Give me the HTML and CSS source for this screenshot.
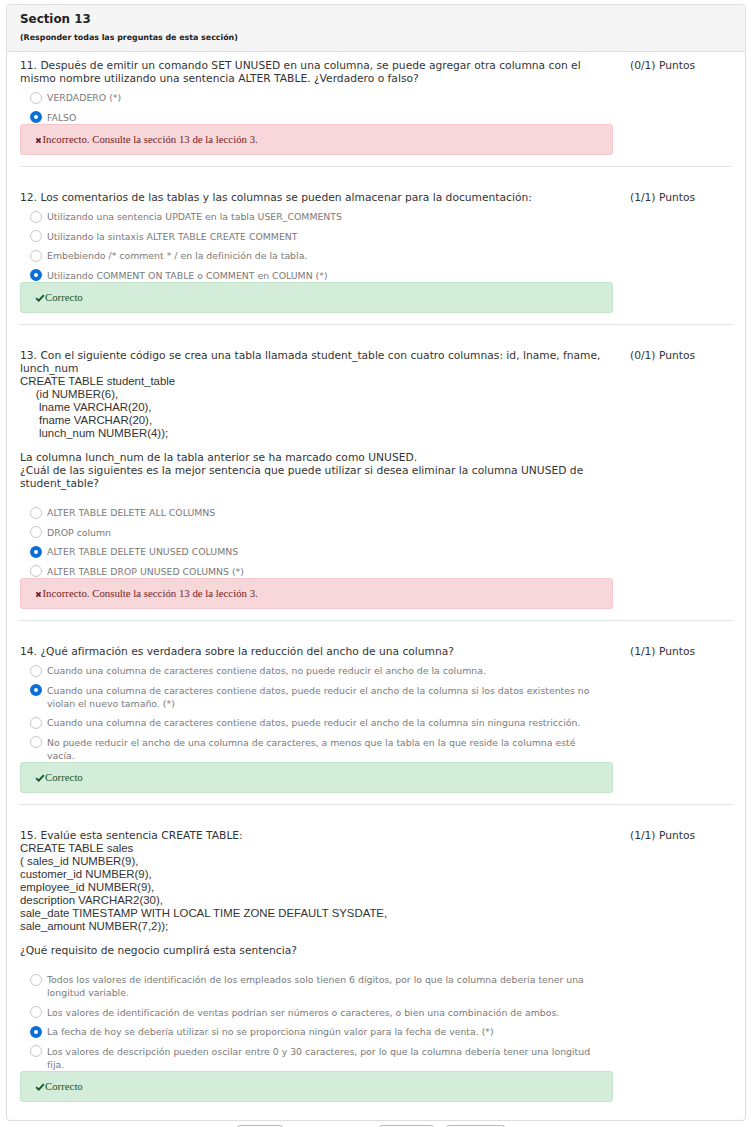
FILE: index.html
```html
<!DOCTYPE html>
<html lang="es">
<head>
<meta charset="utf-8">
<title>Section 13</title>
<link rel="stylesheet" href="styles.css">
</head>
<body>
<div class="panel">
  <div class="panel-head">
    <div class="panel-title">Section 13</div>
    <div class="panel-sub">(Responder todas las preguntas de esta sección)</div>
  </div>
  <div class="panel-body">

    <div class="question">
      <div class="q-main">
        <div class="q-text">11. Después de emitir un comando SET UNUSED en una columna, se puede agregar otra columna con el mismo nombre utilizando una sentencia ALTER TABLE. ¿Verdadero o falso?</div>
        <div class="options">
          <label class="option"><input type="radio" disabled><span>VERDADERO (*)</span></label>
          <label class="option"><input type="radio" checked disabled><span>FALSO</span></label>
        </div>
        <div class="alert alert-danger"><svg class="ico-x" viewBox="0 0 10 10"><path d="M2 2L8 8M8 2L2 8"/></svg>Incorrecto. Consulte la sección 13 de la lección 3.</div>
      </div>
      <div class="q-points">(0/1) Puntos</div>
    </div>
    <hr class="sep">

    <div class="question">
      <div class="q-main">
        <div class="q-text">12. Los comentarios de las tablas y las columnas se pueden almacenar para la documentación:</div>
        <div class="options">
          <label class="option"><input type="radio" disabled><span>Utilizando una sentencia UPDATE en la tabla USER_COMMENTS</span></label>
          <label class="option"><input type="radio" disabled><span>Utilizando la sintaxis ALTER TABLE CREATE COMMENT</span></label>
          <label class="option"><input type="radio" disabled><span>Embebiendo /* comment * / en la definición de la tabla.</span></label>
          <label class="option"><input type="radio" checked disabled><span>Utilizando COMMENT ON TABLE o COMMENT en COLUMN (*)</span></label>
        </div>
        <div class="alert alert-success"><svg class="ico-check" viewBox="0 0 12 10"><path d="M1.2 5.2L4.4 8.3L10.8 1.4"/></svg>Correcto</div>
      </div>
      <div class="q-points">(1/1) Puntos</div>
    </div>
    <hr class="sep">

    <div class="question">
      <div class="q-main">
        <div class="q-text">13. Con el siguiente código se crea una tabla llamada student_table con cuatro columnas: id, lname, fname, lunch_num</div>
        <div class="code">CREATE TABLE student_table<br>&nbsp;&nbsp;&nbsp;&nbsp;&nbsp;(id NUMBER(6),<br>&nbsp;&nbsp;&nbsp;&nbsp;&nbsp;&nbsp;lname VARCHAR(20),<br>&nbsp;&nbsp;&nbsp;&nbsp;&nbsp;&nbsp;fname VARCHAR(20),<br>&nbsp;&nbsp;&nbsp;&nbsp;&nbsp;&nbsp;lunch_num NUMBER(4));</div>
        <div class="q-text q-after">La columna lunch_num de la tabla anterior se ha marcado como UNUSED.<br>¿Cuál de las siguientes es la mejor sentencia que puede utilizar si desea eliminar la columna UNUSED de student_table?</div>
        <div class="options">
          <label class="option"><input type="radio" disabled><span>ALTER TABLE DELETE ALL COLUMNS</span></label>
          <label class="option"><input type="radio" disabled><span>DROP column</span></label>
          <label class="option"><input type="radio" checked disabled><span>ALTER TABLE DELETE UNUSED COLUMNS</span></label>
          <label class="option"><input type="radio" disabled><span>ALTER TABLE DROP UNUSED COLUMNS (*)</span></label>
        </div>
        <div class="alert alert-danger"><svg class="ico-x" viewBox="0 0 10 10"><path d="M2 2L8 8M8 2L2 8"/></svg>Incorrecto. Consulte la sección 13 de la lección 3.</div>
      </div>
      <div class="q-points">(0/1) Puntos</div>
    </div>
    <hr class="sep">

    <div class="question">
      <div class="q-main">
        <div class="q-text">14. ¿Qué afirmación es verdadera sobre la reducción del ancho de una columna?</div>
        <div class="options">
          <label class="option"><input type="radio" disabled><span>Cuando una columna de caracteres contiene datos, no puede reducir el ancho de la columna.</span></label>
          <label class="option"><input type="radio" checked disabled><span>Cuando una columna de caracteres contiene datos, puede reducir el ancho de la columna si los datos existentes no violan el nuevo tamaño. (*)</span></label>
          <label class="option"><input type="radio" disabled><span>Cuando una columna de caracteres contiene datos, puede reducir el ancho de la columna sin ninguna restricción.</span></label>
          <label class="option"><input type="radio" disabled><span>No puede reducir el ancho de una columna de caracteres, a menos que la tabla en la que reside la columna esté vacía.</span></label>
        </div>
        <div class="alert alert-success"><svg class="ico-check" viewBox="0 0 12 10"><path d="M1.2 5.2L4.4 8.3L10.8 1.4"/></svg>Correcto</div>
      </div>
      <div class="q-points">(1/1) Puntos</div>
    </div>
    <hr class="sep">

    <div class="question">
      <div class="q-main">
        <div class="q-text">15. Evalúe esta sentencia CREATE TABLE:</div>
        <div class="code">CREATE TABLE sales<br>( sales_id NUMBER(9),<br>customer_id NUMBER(9),<br>employee_id NUMBER(9),<br>description VARCHAR2(30),<br>sale_date TIMESTAMP WITH LOCAL TIME ZONE DEFAULT SYSDATE,<br>sale_amount NUMBER(7,2));</div>
        <div class="q-text q-after">¿Qué requisito de negocio cumplirá esta sentencia?</div>
        <div class="options">
          <label class="option"><input type="radio" disabled><span>Todos los valores de identificación de los empleados solo tienen 6 dígitos, por lo que la columna debería tener una longitud variable.</span></label>
          <label class="option"><input type="radio" disabled><span>Los valores de identificación de ventas podrían ser números o caracteres, o bien una combinación de ambos.</span></label>
          <label class="option"><input type="radio" checked disabled><span>La fecha de hoy se debería utilizar si no se proporciona ningún valor para la fecha de venta. (*)</span></label>
          <label class="option"><input type="radio" disabled><span>Los valores de descripción pueden oscilar entre 0 y 30 caracteres, por lo que la columna debería tener una longitud fija.</span></label>
        </div>
        <div class="alert alert-success"><svg class="ico-check" viewBox="0 0 12 10"><path d="M1.2 5.2L4.4 8.3L10.8 1.4"/></svg>Correcto</div>
      </div>
      <div class="q-points">(1/1) Puntos</div>
    </div>

  </div>
</div>
<div class="pager">
  <button class="btn btn-prev" type="button" aria-label="Anterior"></button>
  <span class="pager-gap"></span>
  <button class="btn btn-next" type="button" aria-label="Siguiente"></button>
  <button class="btn btn-summary" type="button" aria-label="Resumen"></button>
</div>
</body>
</html>
```
FILE: styles.css
```css
html, body {
  margin: 0;
  padding: 0;
  background: #ffffff;
}

body {
  font-family: "DejaVu Sans", Verdana, sans-serif;
  color: #333333;
}

.panel {
  margin: 4px 6px 0;
  border: 1px solid #dddddd;
  border-radius: 4px;
  background: #ffffff;
  overflow: hidden;
}

.panel-head {
  background: #f5f5f5;
  border-bottom: 1px solid #dddddd;
  padding: 6.5px 13px 8px;
  color: #222222;
}

.panel-title {
  font-weight: bold;
  font-size: 11.9px;
  line-height: 15px;
}

.panel-sub {
  margin-top: 6.5px;
  font-weight: bold;
  font-size: 7.9px;
  line-height: 10px;
}

.panel-body {
  padding: 6.5px 13px 18px;
}

.question {
  display: grid;
  grid-template-columns: 593px 1fr;
  column-gap: 17px;
}

.q-text {
  font-size: 10.7px;
  line-height: 13px;
  color: #333333;
}

.q-after {
  margin-top: 11px;
  margin-bottom: 10px;
}

.code {
  font-family: "Liberation Sans", Arial, sans-serif;
  font-size: 11.4px;
  line-height: 13px;
  color: #333333;
}

.q-points {
  font-size: 10.7px;
  line-height: 13px;
  color: #333333;
}

.options {
  display: flex;
  flex-direction: column;
}

.option {
  display: flex;
  align-items: flex-start;
  padding: 6.5px 0 0 9.5px;
  width: 566px;
  font-size: 9.35px;
  line-height: 13px;
  color: #7a7a7a;
}

.option span {
  flex: 1;
}

.option input {
  appearance: none;
  -webkit-appearance: none;
  flex: none;
  width: 12px;
  height: 12px;
  margin: 0.5px 5.5px 0 0;
  border: 1px solid #c8c8c8;
  border-radius: 50%;
  background: #ffffff;
  box-sizing: border-box;
}

.option input:checked {
  border: 4px solid #0b6fd8;
  background: #ffffff;
}

.alert {
  margin-top: 0.5px;
  border: 1px solid transparent;
  border-radius: 3px;
  padding: 8px 14px;
  font-family: "Liberation Serif", "Times New Roman", serif;
  font-size: 10.8px;
  line-height: 13px;
}

.alert-danger {
  background: #f8d7da;
  border-color: #f5c6cb;
  color: #721c24;
}

.alert-success {
  background: #d4edda;
  border-color: #c3e6cb;
  color: #155724;
}

.ico-x {
  width: 7px;
  height: 7px;
  margin-right: 0.5px;
  vertical-align: -0.5px;
  fill: none;
  stroke: currentColor;
  stroke-width: 2.6;
}

.ico-check {
  width: 10px;
  height: 8px;
  vertical-align: -0.5px;
  fill: none;
  stroke: currentColor;
  stroke-width: 2.4;
}

.sep {
  border: 0;
  border-top: 1px solid #e3e3e3;
  margin: 10.5px 0 24px;
}

.pager {
  display: flex;
  align-items: flex-start;
  margin-top: 3.5px;
  padding-left: 237px;
}

.btn {
  height: 28px;
  border: 1px solid #b9b9b9;
  border-radius: 3px;
  background: #ffffff;
  padding: 0;
}

.btn-prev { width: 46px; }
.btn-next { width: 55px; }
.btn-summary { width: 59px; margin-left: 12px; }

.pager-gap {
  width: 96px;
}
```
